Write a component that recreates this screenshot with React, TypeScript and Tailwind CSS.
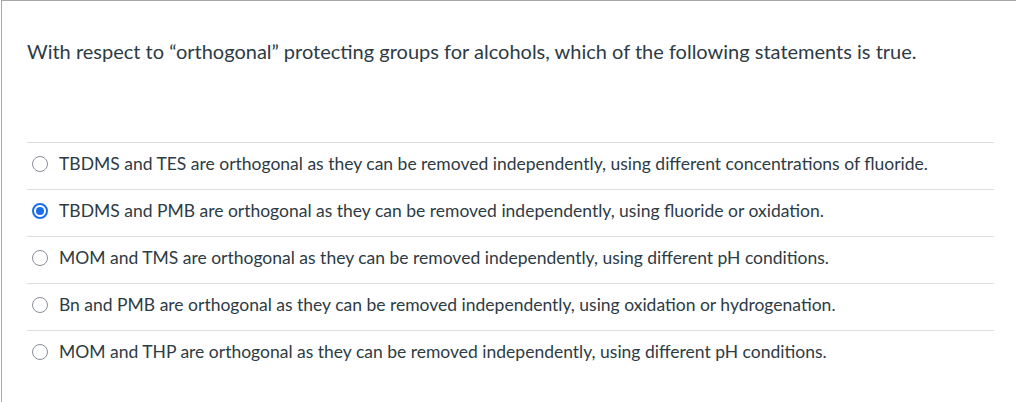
const answers = [
  { text: "TBDMS and TES are orthogonal as they can be removed independently, using different concentrations of fluoride.", checked: false },
  { text: "TBDMS and PMB are orthogonal as they can be removed independently, using fluoride or oxidation.", checked: true },
  { text: "MOM and TMS are orthogonal as they can be removed independently, using different pH conditions.", checked: false },
  { text: "Bn and PMB are orthogonal as they can be removed independently, using oxidation or hydrogenation.", checked: false },
  { text: "MOM and THP are orthogonal as they can be removed independently, using different pH conditions.", checked: false },
];

function Radio({ checked }: { checked: boolean }) {
  if (checked) {
    return (
      <span className="w-[16px] h-[16px] rounded-full border-2 border-[#1a6fe8] flex items-center justify-center shrink-0">
        <span className="w-[8px] h-[8px] rounded-full bg-[#1a6fe8]" />
      </span>
    );
  }
  return <span className="w-[16px] h-[16px] rounded-full border-[1.5px] border-[#8a8f98] shrink-0" />;
}

export default function App() {
  return (
    <div className="w-[1016px] h-[402px] bg-white overflow-hidden" style={{ fontFamily: "Lato, 'Noto Sans', sans-serif" }}>
      <div className="ml-[1px] h-full border-t border-l border-[#a8a8a8] pl-[25px] pr-[22px] text-[#2d3b45]">
        {/* question */}
        <div className="pt-[36px] text-[20px] leading-[28px]">
          With respect to “orthogonal” protecting groups for alcohols, which of the following statements is true.
        </div>

        {/* answers */}
        <div className="mt-[77px]">
          {answers.map((a, i) => (
            <div key={i} className="border-t border-[#dcdfe2] h-[47px] flex items-center gap-[11px] pl-[5px] pb-[4px] text-[17.5px]">
              <Radio checked={a.checked} />
              <span>{a.text}</span>
            </div>
          ))}
        </div>
      </div>
    </div>
  );
}
